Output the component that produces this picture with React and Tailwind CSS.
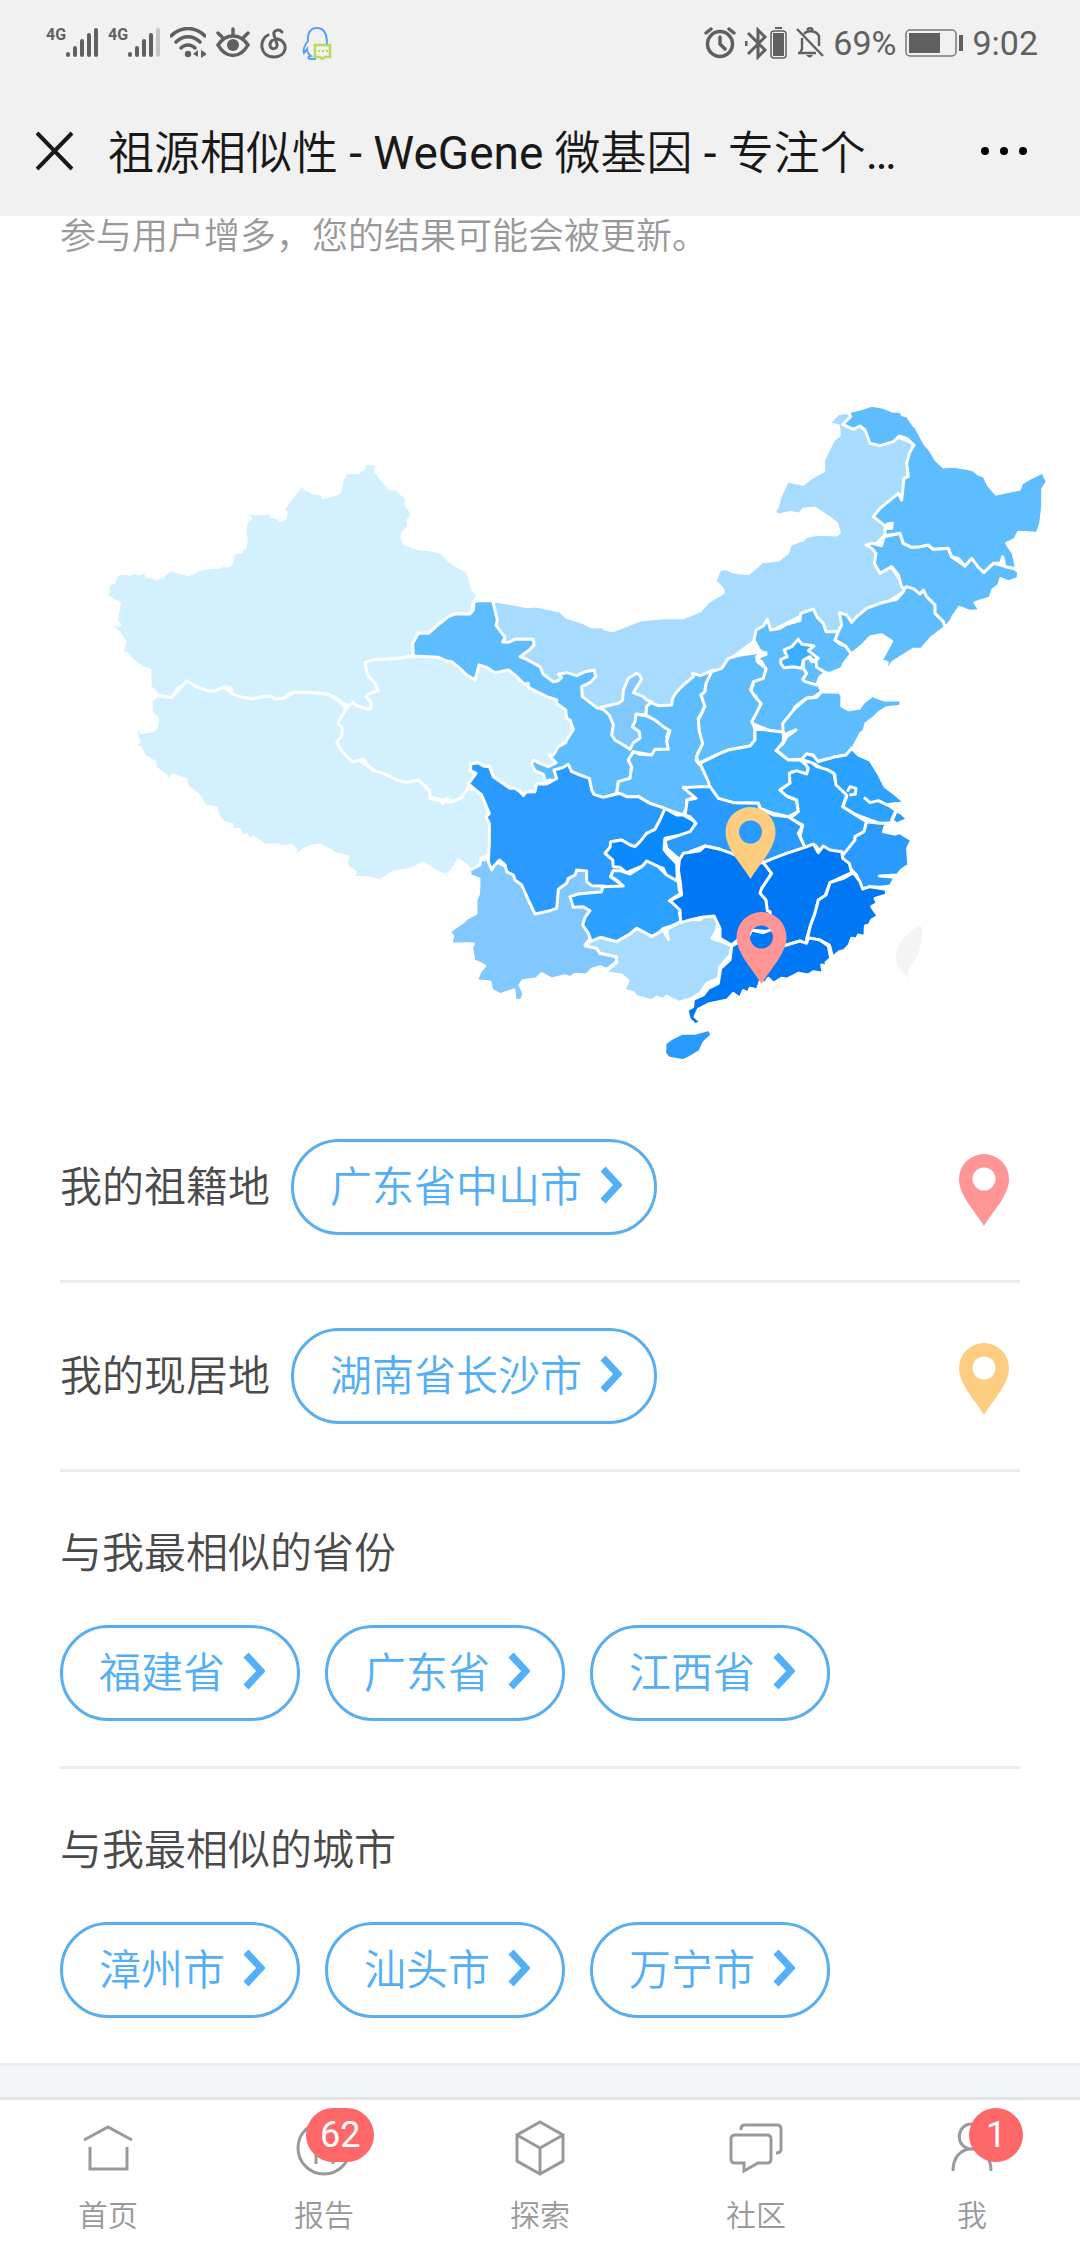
import React from 'react';

const PINK = '#ff9595';
const ORANGE = '#ffcd80';

// The map was traced in four tiles, each in thirds of a pixel
const TILES = {
    west: 'translate(90 440) scale(0.33333)',
    center: 'translate(400 560) scale(0.33333)',
    north: 'translate(680 390) scale(0.33333)',
    south: 'translate(640 640) scale(0.33333)',
};

// Painted in order, later provinces cover the rough edges of earlier ones
const PROVINCES = [
    {
        name: '西藏', tile: 'west', fill: '#d3f0ff',
        d: 'M205 765L245 772 290 722 375 753 400 740 425 760 485 775 540 768 580 777 610 757 690 760 715 762 760 792 765 805 780 940 850 990 880 1000 920 1018 950 1027 985 1020 1020 1055 1020 1075 1058 1085 1085 1085 1115 1072 1130 1045 1165 1050 1190 1090 1204 1120 1190 1130 1203 1160 1203 1245 1176 1252 1168 1285 1142 1292 1128 1275 1105 1260 1085 1292 1065 1307 1035 1292 998 1270 965 1287 910 1297 870 1322 835 1314 788 1312 796 1297 768 1275 774 1250 752 1244 735 1242 720 1230 690 1215 670 1217 640 1230 608 1254 617 1230 605 1216 575 1220 560 1214 525 1215 490 1192 475 1199 470 1184 456 1189 450 1169 418 1167 428 1154 400 1147 382 1125 380 1104 345 1098 330 1070 290 1037 288 1019 250 1005 233 1024 228 1007 198 985 195 967 163 947 153 925 136 918 147 905 138 877 143 858 155 877 180 874 197 866 203 835 183 815 184 782Z',
    },
    {
        name: '新疆', tile: 'west', fill: '#d3f0ff',
        d: 'M50 468L58 432 72 427 80 405 98 400 120 402 138 395 145 402 167 394 170 409 190 411 200 417 215 411 242 389 262 396 298 404 325 389 365 382 385 382 400 377 415 378 425 370 430 340 455 336 447 328 465 325 468 300 465 265 472 242 483 235 462 219 490 221 540 220 545 230 560 231 572 242 585 235 588 217 578 211 600 180 635 136 650 150 670 158 695 162 700 173 735 164 750 155 756 120 770 97 805 98 820 85 824 70 860 73 857 95 880 125 900 146 920 148 948 174 949 198 964 215 962 235 954 240 956 260 938 278 936 292 942 310 980 325 1030 331 1058 340 1075 360 1100 378 1130 394 1140 415 1147 445 1165 472 1150 485 1145 515 1135 522 1100 520 1075 530 1040 558 1015 580 985 580 970 610 970 648 900 660 850 660 825 668 833 705 855 730 865 752 835 762 828 770 843 785 843 805 835 808 800 797 788 787 778 797 760 792 735 772 715 762 690 760 650 757 610 757 595 762 580 775 555 777 540 768 515 770 485 776 450 770 425 761 424 745 400 740 375 753 355 753 320 740 290 722 280 735 262 746 245 773 205 765 180 740 180 690 158 683 120 655 118 645 97 635 104 605 85 575 72 565 44 555 90 555 80 540 88 490Z',
    },
    {
        name: '内蒙古', tile: 'center', fill: '#a7dbff',
        d: 'M278 122L345 133 380 140 410 138 480 153 500 172 545 186 575 201 610 201 615 208 640 212 720 180 790 173 850 173 900 153 925 125 970 98 968 88 945 62 960 28 980 26 1000 36 1045 41 1068 22 1087 5 1135 0 1162 -20 1172 -48 1208 -60 1218 -70 1250 -77 1310 -75 1318 -83 1310 -110 1290 -125 1245 -155 1212 -153 1198 -137 1170 -143 1133 -134 1123 -148 1133 -160 1138 -185 1162 -237 1210 -227 1235 -248 1272 -267 1270 -298 1300 -360 1318 -374 1316 -402 1286 -410 1315 -439 1340 -443 1370 -420 1540 -350 1510 -190 1450 -130 1460 -80 1420 -40 1480 30 1520 90 1330 210 1280 220 1200 170 1080 230 1000 290 940 350 830 460 750 460 600 470 540 430 480 390 300 260Z',
    },
    {
        name: '甘肃', tile: 'center', fill: '#5ebdff',
        d: 'M40 290L38 250 55 220 85 220 110 198 145 170 165 162 210 162 220 150 222 125 235 122 278 122 292 180 288 196 315 232 308 246 325 247 345 238 380 237 400 238 402 255 388 270 360 290 380 298 420 320 430 343 460 365 475 362 485 352 475 343 500 338 530 347 555 335 583 330 587 350 570 368 545 380 547 410 590 443 620 450 700 480 710 462 740 468 765 480 808 510 800 530 805 560 805 568 765 570 755 585 700 575 685 600 695 620 690 655 655 665 650 700 610 715 560 705 450 660 420 670 380 600 440 590 440 500 150 320Z',
    },
    {
        name: '青海', tile: 'center', fill: '#d3f0ff',
        d: 'M-105 308L-97 345 -75 370 -65 392 -95 402 -102 410 -87 425 -87 445 -95 448 -130 437 -142 428 -152 437 -172 434 -160 446 -182 480 -185 492 -173 502 -175 530 -190 545 -180 565 -165 585 -143 605 -110 598 -98 615 -75 633 -50 640 -28 650 -10 660 20 667 55 660 70 672 90 692 90 712 128 720 128 732 138 715 158 725 185 712 200 690 210 672 228 640 212 632 212 612 235 608 250 616 268 620 280 650 330 685 360 692 370 707 378 696 405 695 410 672 438 670 430 643 405 632 395 612 400 600 420 610 445 620 468 608 447 585 460 585 475 560 497 548 500 540 520 508 510 480 500 475 497 450 470 430 470 420 440 410 385 382 385 370 372 372 345 345 325 330 285 338 260 322 237 315 225 360 200 345 180 325 155 305 140 303 115 292 40 288 -5 295 -50 298 -85 300Z',
    },
    {
        name: '宁夏', tile: 'center', fill: '#80c8ff',
        d: 'M603 442L655 430 668 420 670 390 685 355 710 340 718 345 725 357 700 398 730 410 740 420 755 425 740 440 738 465 708 462 705 485 697 500 718 515 720 535 700 548 690 568 670 555 645 540 635 525 640 495 628 465Z',
    },
    {
        name: '陕西', tile: 'center', fill: '#5ebdff',
        d: 'M752 428L775 437 815 435 818 415 828 398 850 375 880 350 878 340 900 347 940 330 930 360 915 385 918 400 903 405 915 435 905 460 895 475 900 515 910 550 895 575 888 600 905 620 932 670 925 685 850 682 868 695 887 712 860 720 862 740 850 765 820 755 750 730 715 710 690 715 650 700 655 665 690 655 695 620 685 600 700 575 720 583 755 585 765 568 805 568 800 545 810 512 790 500 765 480 738 465 740 440Z',
    },
    {
        name: '云南', tile: 'center', fill: '#80c8ff',
        d: 'M268 895L260 885 255 900 242 897 240 915 208 932 212 948 237 957 236 1000 228 1020 228 1060 200 1075 190 1085 162 1105 148 1115 158 1128 153 1152 220 1151 215 1165 222 1203 240 1210 254 1218 242 1232 228 1262 270 1266 275 1290 300 1304 342 1290 345 1320 365 1322 371 1300 360 1275 368 1262 410 1256 425 1241 455 1257 495 1247 510 1253 525 1243 560 1245 575 1228 600 1220 620 1228 650 1205 650 1190 600 1180 590 1165 555 1155 575 1130 600 1050 640 990 620 960 520 900 400 960Z',
    },
    {
        name: '四川', tile: 'center', fill: '#2b9aff',
        d: 'M205 672L228 640 212 632 212 612 235 608 250 618 268 620 280 650 330 685 345 685 360 695 370 707 378 696 405 695 410 672 440 672 470 655 462 630 490 622 505 613 515 635 540 645 568 655 575 690 582 703 610 712 660 700 680 710 715 710 750 730 795 745 798 765 780 780 765 808 740 820 720 850 705 860 690 855 665 840 635 845 632 858 640 870 700 900 690 940 640 932 632 950 670 978 650 985 610 978 575 977 560 965 560 933 530 930 525 945 505 955 500 970 475 988 470 1045 450 1052 405 1062 385 1020 365 975 345 960 340 945 320 935 315 915 298 900 282 918 275 930 265 905 268 850 268 790 258 770 268 760 245 705Z',
    },
    {
        name: '重庆', tile: 'center', fill: '#0b8aff',
        d: 'M795 745L830 765 850 765 885 785 885 810 870 820 795 835 792 868 805 885 830 910 832 958 815 960 800 950 790 925 775 920 740 905 728 918 680 938 660 922 640 920 638 900 615 880 630 862 632 845 665 840 690 855 705 860 720 845 740 820 765 808 780 780Z',
    },
    {
        name: '贵州', tile: 'center', fill: '#2ba2ff',
        d: 'M510 1010L535 1002 605 995 608 980 670 978 650 960 632 950 640 932 660 932 690 942 728 918 740 903 775 920 800 945 835 965 838 990 843 1000 808 1022 845 1040 838 1060 845 1085 815 1098 790 1105 775 1120 755 1130 738 1120 710 1105 690 1122 650 1145 605 1132 575 1148 565 1120 548 1095 555 1072 570 1052 550 1040 520 1042Z',
    },
    {
        name: '广西', tile: 'center', fill: '#a7dbff',
        d: 'M556 1158L570 1145 600 1133 650 1145 690 1122 710 1105 738 1120 755 1130 790 1110 805 1138 800 1108 842 1085 870 1078 900 1080 915 1065 945 1065 955 1090 948 1115 935 1135 965 1145 995 1158 990 1185 960 1220 955 1255 920 1270 900 1300 875 1315 835 1327 800 1308 790 1318 770 1312 755 1322 710 1310 700 1298 672 1290 684 1262 665 1245 615 1238 650 1208 650 1190 600 1180 590 1165Z',
    },
    {
        name: '河北', tile: 'north', fill: '#5ebdff',
        d: 'M238 780L222 750 228 720 250 708 262 688 272 720 300 715 320 703 360 692 362 670 400 657 412 682 430 700 438 725 475 725 465 750 480 762 497 768 514 792 492 820 485 835 450 850 430 848 415 880 425 905 400 922 378 925 345 950 335 975 310 1000 312 1027 270 1022 215 1000 222 975 242 945 228 920 212 905 225 865 248 862 258 840 245 815 230 805 258 793Z',
    },
    {
        name: '天津', tile: 'north', fill: '#5ebdff',
        d: 'M370 810L385 800 395 815 408 812 410 832 437 848 420 860 410 885 375 875 368 868 380 850 370 835Z',
    },
    {
        name: '北京', tile: 'north', fill: '#3bafff',
        d: 'M355 748L365 762 402 768 385 782 415 805 400 812 390 800 370 810 365 835 340 830 312 833 302 820 303 808 322 800 312 780 335 770Z',
    },
    {
        name: '山西', tile: 'south', fill: '#5ebdff',
        d: 'M215 95L245 85 265 55 300 45 350 38 378 38 350 50 352 65 378 85 370 115 340 125 332 150 345 170 363 190 350 218 335 245 345 265 345 300 330 318 265 330 240 340 175 370 170 350 188 310 178 275 175 240 195 200 183 165 195 155 198 130Z',
    },
    {
        name: '吉林', tile: 'north', fill: '#5ebdff',
        d: 'M665 590L655 555 635 530 600 550 583 520 588 490 575 475 558 465 575 460 605 467 612 440 660 430 670 460 695 472 745 465 760 478 805 475 815 500 855 528 875 505 910 547 940 520 1000 535 1016 545 1014 565 985 576 962 566 957 585 938 600 930 624 885 638 900 662 870 664 838 652 818 682 810 697 795 712 720 640Z',
    },
    {
        name: '辽宁', tile: 'north', fill: '#5ebdff',
        d: 'M475 725L485 705 478 668 500 675 515 697 530 680 560 655 600 640 650 628 670 605 678 590 700 596 720 612 730 600 740 620 765 645 765 670 790 695 795 712 755 742 725 777 700 778 640 815 627 832 618 830 622 817 603 812 635 754 605 734 572 740 545 768 514 792 497 768 465 750Z',
    },
    {
        name: '黑龙江', tile: 'north', fill: '#5ebdff',
        d: 'M505 65L540 57 575 46 610 52 640 64 660 63 668 75 682 78 700 105 708 112 727 148 735 162 752 182 768 210 790 231 820 229 860 235 880 240 895 252 912 258 925 285 948 312 980 305 1018 298 1025 280 1055 262 1088 246 1102 275 1088 297 1088 350 1082 400 1072 430 1015 427 1005 448 980 460 1000 490 1010 536 975 530 968 500 962 520 940 520 912 547 895 532 875 505 855 528 835 505 815 500 805 475 760 478 745 465 720 470 695 472 670 460 660 430 615 437 615 415 635 415 637 400 622 402 618 410 580 380 600 355 655 310 665 330 672 265 685 260 680 220 688 190 702 165 680 145 658 138 640 155 600 167 570 160 555 120 540 108 520 118 488 103 512 80Z',
    },
    {
        name: '山东', tile: 'south', fill: '#5ebdff',
        d: 'M545 155L600 157 606 170 605 198 625 209 657 205 672 185 698 166 712 173 735 180 785 180 781 199 740 203 720 215 705 230 678 250 672 272 662 280 640 322 618 345 580 352 550 360 530 365 520 345 500 342 485 358 445 360 408 330 430 310 440 290 468 270 430 285 428 250 465 205 500 175 530 172Z',
    },
    {
        name: '河南', tile: 'south', fill: '#3bafff',
        d: 'M180 370L240 340 265 330 330 318 345 300 345 265 380 270 430 277 430 305 408 332 445 360 480 360 505 380 500 402 480 400 455 395 450 430 420 450 440 468 470 480 475 515 445 530 400 520 360 505 355 490 280 488 235 475 212 450 205 425Z',
    },
    {
        name: '江苏', tile: 'south', fill: '#2ba2ff',
        d: 'M485 358L500 342 520 347 535 365 580 352 618 345 635 325 655 345 690 360 715 400 735 440 765 462 795 488 745 495 758 505 802 535 765 555 720 550 690 540 650 525 608 500 620 470 585 440 585 405 545 385 520 370Z',
    },
    {
        name: '上海', tile: 'south', fill: '#2b9aff',
        d: 'M768 512L785 520 803 538 770 552 755 540Z',
    },
    {
        name: '安徽', tile: 'south', fill: '#2ba2ff',
        d: 'M490 362L515 368 530 380 560 388 582 400 588 435 620 465 608 500 655 530 680 545 672 575 645 595 645 615 620 650 605 635 545 638 525 615 495 625 480 590 488 555 450 535 475 515 470 480 440 468 420 450 450 430 448 400 470 392 500 402 505 385Z',
    },
    {
        name: '湖北', tile: 'south', fill: '#2b9aff',
        d: 'M210 440L235 475 280 488 355 490 360 505 400 525 445 530 488 558 475 580 495 622 440 640 405 655 375 665 330 665 280 645 240 628 195 618 150 635 120 660 80 625 75 600 150 575 168 550 150 530 135 525 142 480 168 475 130 443 180 440Z',
    },
    {
        name: '湖南', tile: 'south', fill: '#0077f5',
        d: 'M118 660L130 640 180 632 195 618 240 628 275 640 330 668 370 668 395 700 380 725 365 745 385 800 400 840 390 875 330 870 275 915 240 895 240 865 222 828 185 832 150 840 122 848 120 810 90 782 125 765 120 720 115 690Z',
    },
    {
        name: '浙江', tile: 'south', fill: '#2b9aff',
        d: 'M605 650L645 600 645 590 672 575 680 545 720 550 760 548 735 560 730 575 765 582 780 578 815 600 803 625 806 675 785 690 772 705 718 708 765 712 752 738 720 742 690 740 665 748 650 705 635 690Z',
    },
    {
        name: '江西', tile: 'south', fill: '#0077f5',
        d: 'M370 668L400 655 440 640 495 622 520 612 535 638 550 618 570 630 605 635 608 655 628 670 635 698 570 728 555 768 535 780 525 820 512 855 500 895 500 912 480 903 430 918 395 870 390 815 382 812 378 780 360 760 365 745 395 700Z',
    },
    {
        name: '福建', tile: 'south', fill: '#0077f5',
        d: 'M640 698L660 725 668 747 690 740 738 748 740 765 722 770 705 775 712 790 695 800 714 828 695 840 688 855 676 858 675 890 655 885 650 898 635 895 628 915 612 932 598 935 578 952 568 915 540 900 502 895 512 855 525 820 535 780 558 765 570 728 610 715Z',
    },
    {
        name: '广东', tile: 'south', fill: '#0077f5',
        d: 'M275 918L300 905 325 890 335 870 370 878 395 868 430 918 480 903 500 910 505 893 540 900 565 918 572 955 558 968 562 980 545 975 550 1000 520 995 505 1005 475 1000 440 1018 425 1015 400 1030 385 1015 375 1030 360 1025 352 1050 330 1045 325 1060 310 1052 300 1075 280 1060 262 1080 205 1092 175 1108 165 1130 184 1147 165 1154 148 1138 141 1110 158 1100 160 1078 190 1065 205 1045 235 1030 242 985 270 960Z',
    },
    {
        name: '海南', tile: 'south', fill: '#2b9aff',
        d: 'M75 1210L95 1195 125 1180 165 1180 208 1168 216 1185 192 1207 180 1234 150 1252 130 1262 85 1254 74 1240Z',
    },
    {
        name: '台湾', tile: 'south', fill: '#f4f4f4',
        d: 'M832 853L852 858 848 905 837 950 810 990 810 1030 793 1007 768 980 763 950 773 910 800 878Z',
    },
];

const PIN_PATH = 'M25 72C17 58 0 42 0 25a25 25 0 0 1 50 0C50 42 33 58 25 72ZM25 13.500a11.500 11.500 0 1 0 0 23 11.500 11.500 0 0 0 0-23Z';

function ChinaMap() {
    return (
        <svg viewBox="0 254 1080 840" className="block w-full" role="img" aria-label="祖源相似性地图">
            {PROVINCES.map((p) => (
                <g key={p.name} transform={TILES[p.tile]}>
                    <path d={p.d} fill={p.fill} stroke="#fff" strokeWidth="9" strokeLinejoin="round" />
                </g>
            ))}
            {/* Yangtze estuary and the lakes beside it */}
            <g transform={TILES.south} fill="none" stroke="#fff" strokeWidth="9" strokeLinejoin="round">
                <path d="M672 472L690 488 715 482 740 494 795 488M622 455L630 440 648 445 646 462 628 465M770 510L755 545" />
            </g>
            <path d="M771 988l7-4 5 3-4 2z" fill="#f4f4f4" />
            <g transform="translate(725.500 807)">
                <path d={PIN_PATH} fill={ORANGE} fillRule="evenodd" />
            </g>
            <g transform="translate(736.500 912)">
                <path d={PIN_PATH} fill={PINK} fillRule="evenodd" />
            </g>
        </svg>
    );
}

function Pin({ color }) {
    return (
        <svg viewBox="0 -6 50 78" width="50" height="78" aria-hidden="true">
            <path d={PIN_PATH} fill={color} fillRule="evenodd" />
        </svg>
    );
}

function PlaceButton({ children }) {
    return (
        <button className="flex h-24 items-center rounded-full border-3 border-[#59aeee] pl-9 pr-8 text-[42px] leading-[63px] text-[#53aff5]">
            {children}
            <svg viewBox="0 0 24 44" width="24" height="44" className="ml-4" aria-hidden="true">
                <path d="M5 4L20 20 5 36" fill="none" stroke="#53b0f8" strokeWidth="7" />
            </svg>
        </button>
    );
}

function PlaceRow({ label, place, color }) {
    return (
        <div className="flex items-center border-b-3 border-[#e9edf1] py-[45px] pr-[11px]">
            <span className="mr-[21px]">{label}</span>
            <PlaceButton>{place}</PlaceButton>
            <span className="ml-auto">
                <Pin color={color} />
            </span>
        </div>
    );
}

function SimilarSection({ title, places, last }) {
    return (
        <section className={last ? 'pt-[50px] pb-[45px]' : 'border-b-3 border-[#e9edf1] pt-[50px] pb-[45px]'}>
            <h2 className="leading-[63px]">{title}</h2>
            <div className="mt-10 flex gap-[25px]">
                {places.map((p) => (
                    <PlaceButton key={p}>{p}</PlaceButton>
                ))}
            </div>
        </section>
    );
}

function Signal({ weak }) {
    return (
        <span className="flex h-8 items-start">
            <span className="text-base leading-4 font-bold">4G</span>
            <svg viewBox="0 0 32 32" width="32" height="32" stroke="#606060" strokeWidth="4" strokeLinecap="round">
                <path d="M2 27v1M9 21v7M16 14v14M23 8v20" />
                <path d="M30 3v25" stroke={weak ? '#c6c6c6' : '#606060'} />
            </svg>
        </span>
    );
}

function StatusBar() {
    return (
        <div className="flex h-[86px] items-center justify-between pr-[42px] pl-[46px] text-[34px] font-normal text-[#606060]">
            <div className="flex items-center gap-[10px]">
                <Signal />
                <Signal weak />
                {/* Wifi */}
                <svg viewBox="0 0 36 32" width="36" height="32" fill="none" stroke="#606060" strokeWidth="3.500">
                    <path d="M1 9C11-1 25-1 35 9M6 15c7-7 17-7 24 0M11 21c4-4 10-4 14 0" strokeLinecap="round" />
                    <circle cx="18" cy="27" r="3.200" fill="#606060" stroke="none" />
                    <path d="M28 23v7l-5-3zM31 23v8l6-4z" fill="#606060" stroke="none" />
                </svg>
                {/* Eye */}
                <svg viewBox="0 0 34 32" width="34" height="32" fill="none" stroke="#606060" strokeWidth="3.500" strokeLinecap="round">
                    <path d="M2 18C10 6 24 6 32 18 24 32 10 32 2 18ZM17 7V2M6 10L2 6M28 10l4-4" />
                    <circle cx="17" cy="18" r="6" fill="#606060" stroke="none" />
                </svg>
                {/* Music */}
                <svg viewBox="0 0 32 32" width="32" height="32" fill="none" stroke="#606060" strokeWidth="3" strokeLinecap="round">
                    <path d="M22 5c-4-4-9-1-8 3l3 9c1 6-7 6-7 1 0-4 4-7 8-6 11 3 9 18-4 18C-1 30-1 12 8 8" />
                </svg>
                {/* QQ */}
                <svg viewBox="0 0 32 34" width="32" height="34" fill="none" strokeWidth="2">
                    <path d="M25 18C25 8 22 2 15 2S5 8 6 15c-4 5-5 9-4 12l3-4c0 3 1 5 4 7-4 1-3 3 0 3h5" stroke="#5a9ff5" />
                    <path d="M13 19h15v12h-5l-3 2-2-2h-5z" stroke="#b9d95c" strokeWidth="2.500" />
                    <path d="M16 25h2M20 25h2M24 25h2" stroke="#b9d95c" />
                </svg>
            </div>
            <div className="flex items-center gap-[9px]">
                {/* Alarm */}
                <svg viewBox="0 0 32 32" width="32" height="32" fill="none" stroke="#606060" strokeWidth="3.500">
                    <circle cx="16" cy="17" r="12.500" />
                    <path d="M16 10v7l5 5M2 6l5-4M30 6l-5-4" strokeLinecap="round" />
                </svg>
                {/* Bluetooth with device battery */}
                <svg viewBox="0 0 42 33" width="42" height="33" fill="none" stroke="#606060" strokeWidth="3">
                    <path d="M3 6L20 23 13 30V3l7 7L3 27M1 14v5" />
                    <rect x="26" y="4" width="15" height="27" rx="3" strokeWidth="1.500" />
                    <path d="M28 6h11v23H28zM30 0h7v2h-7z" fill="#606060" stroke="none" />
                </svg>
                {/* Muted bell */}
                <svg viewBox="0 0 28 32" width="28" height="32" fill="none" stroke="#606060" strokeWidth="2.400">
                    <path d="M1 2l26 27M2 26h18M4 26l2-4V11M8 7c3-4 12-4 15 2v10M11 3q3-4 6 0" />
                    <path d="M10 28h7q-3 5-7 0z" fill="#606060" stroke="none" />
                </svg>
                <span>69%</span>
                {/* Battery */}
                <svg viewBox="0 0 58 28" width="58" height="28">
                    <rect x="1" y="1" width="50" height="26" rx="4" fill="none" stroke="#777" strokeWidth="1.500" />
                    <path d="M4 4h31v20H4zM54 6h4v16h-4z" fill="#606060" />
                </svg>
                <span>9:02</span>
            </div>
        </div>
    );
}

function TitleBar() {
    return (
        <div className="flex h-[130px] items-center pr-[52px] pl-9 text-[#181818]">
            <button aria-label="关闭">
                <svg viewBox="0 0 38 40" width="38" height="40" className="block">
                    <path d="M1 2l35 36M36 2L1 38" stroke="#181818" strokeWidth="4" />
                </svg>
            </button>
            <h1 className="ml-[34px] flex-1 truncate pt-1 text-[46px] leading-[60px]">
                祖源相似性 <span className="font-normal">- WeGene</span> 微基因 <span className="font-normal">-</span> 专注个
                <span className="font-normal">…</span>
            </h1>
            <button aria-label="更多">
                <svg viewBox="0 0 48 10" width="48" height="10" className="block">
                    <circle cx="5" cy="5" r="4" />
                    <circle cx="24" cy="5" r="4" />
                    <circle cx="43" cy="5" r="4" />
                </svg>
            </button>
        </div>
    );
}

const TABS = [
    { label: '首页', icon: <path d="M4 20L28 7l24 13M10 27v22h37V27" /> },
    {
        label: '报告',
        icon: <path d="M28 2a26 26 0 1 1 0 52 26 26 0 0 1 0-52ZM20 44c0-20 2-30 8-30s9 10 9 30" />,
        badge: '62',
        badgeClass: 'left-[10px]',
    },
    { label: '探索', icon: <path d="M28 2l23 13v26L28 54 5 41V15ZM5 15l23 13 23-13M28 28v26" /> },
    {
        label: '社区',
        icon: <path d="M7 15h32q4 0 4 4v20q0 4-4 4h-9l-14 8v-8H7q-4 0-4-4V19q0-4 4-4ZM13 10V9q0-4 4-4h32q4 0 4 4v20q0 4-5 4" />,
    },
    {
        label: '我',
        icon: <path d="M28 29c-17 0-17-25 0-25s17 25 0 25C15 29 9 39 9 51M28 29c13 0 19 10 19 22" />,
        badge: '1',
        badgeClass: 'left-[25px]',
    },
];

function TabBar() {
    return (
        <nav className="grid grid-cols-5 border-t-3 border-[#e1e4e6] bg-white pt-5 pb-[6px]">
            {TABS.map((t) => (
                <a key={t.label} href="#" className="flex flex-col items-center gap-[18px] text-[30px] leading-[44px] text-[#999]">
                    <span className="relative">
                        <svg viewBox="0 0 56 56" width="56" height="56" fill="none" stroke="#999" strokeWidth="3" className="block">
                            {t.icon}
                        </svg>
                        {t.badge && (
                            <span className={`absolute -top-3 ${t.badgeClass} h-[54px] min-w-[54px] rounded-full bg-[#ff6868] px-[14px] text-center text-4xl leading-[54px] font-normal text-white`}>
                                {t.badge}
                            </span>
                        )}
                    </span>
                    {t.label}
                </a>
            ))}
        </nav>
    );
}

export default function App() {
    return (
        <div className="bg-white font-['Roboto','Noto_Sans_CJK_SC',sans-serif] font-[350] text-[#4a4a4a]">
            <header className="bg-[#f1f1f1]">
                <StatusBar />
                <TitleBar />
            </header>
            <main>
                <p className="px-15 pt-1 text-4xl leading-[34px] text-[#999]">参与用户增多，您的结果可能会被更新。</p>
                <ChinaMap />
                <div className="px-15 text-[42px]">
                    <PlaceRow label="我的祖籍地" place="广东省中山市" color={PINK} />
                    <PlaceRow label="我的现居地" place="湖南省长沙市" color={ORANGE} />
                    <SimilarSection title="与我最相似的省份" places={['福建省', '广东省', '江西省']} />
                    <SimilarSection title="与我最相似的城市" places={['漳州市', '汕头市', '万宁市']} last />
                </div>
                <div className="h-[34px] border-t-3 border-[#e9edf0] bg-[#f2f6f9]" />
            </main>
            <TabBar />
        </div>
    );
}
